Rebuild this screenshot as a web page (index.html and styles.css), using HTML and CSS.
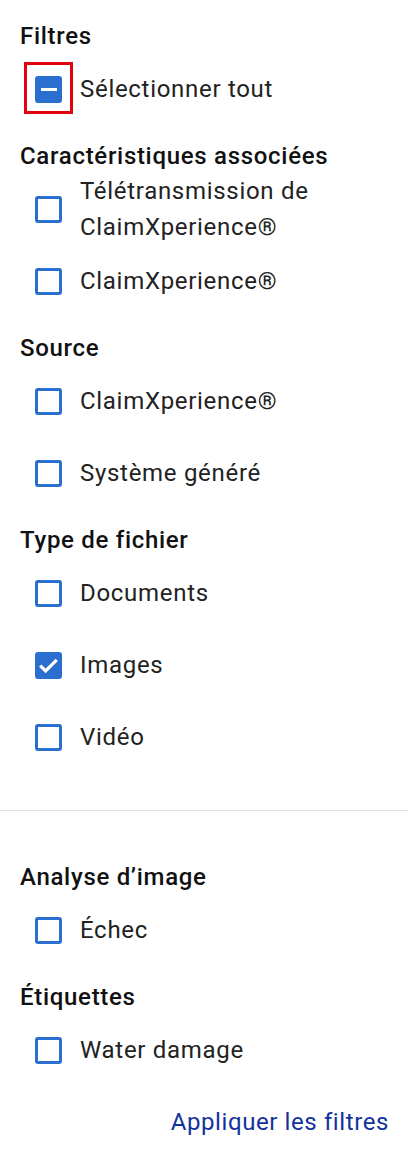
FILE: index.html
```html
<!DOCTYPE html>
<html lang="fr">
<head>
<meta charset="utf-8">
<title>Filtres</title>
<link rel="stylesheet" href="styles.css">
</head>
<body>
<div class="panel">
  <section class="group">
    <h2 class="group-title">Filtres</h2>
    <label class="option">
      <span class="box box--filled box--focus">
        <svg viewBox="0 0 27 27" width="27" height="27"><rect x="6" y="12" width="16" height="3" fill="#fff"/></svg>
      </span>
      <span class="option-label">Sélectionner tout</span>
    </label>
  </section>

  <section class="group">
    <h2 class="group-title">Caractéristiques associées</h2>
    <label class="option">
      <span class="box"></span>
      <span class="option-label">Télétransmission de ClaimXperience®</span>
    </label>
    <label class="option">
      <span class="box"></span>
      <span class="option-label">ClaimXperience®</span>
    </label>
  </section>

  <section class="group">
    <h2 class="group-title">Source</h2>
    <label class="option">
      <span class="box"></span>
      <span class="option-label">ClaimXperience®</span>
    </label>
    <label class="option">
      <span class="box"></span>
      <span class="option-label">Système généré</span>
    </label>
  </section>

  <section class="group">
    <h2 class="group-title">Type de fichier</h2>
    <label class="option">
      <span class="box"></span>
      <span class="option-label">Documents</span>
    </label>
    <label class="option">
      <span class="box box--filled">
        <svg viewBox="0 0 27 27" width="27" height="27"><path d="M5.2 13.6 L10.6 19 L21.8 7.8" fill="none" stroke="#fff" stroke-width="3.2"/></svg>
      </span>
      <span class="option-label">Images</span>
    </label>
    <label class="option">
      <span class="box"></span>
      <span class="option-label">Vidéo</span>
    </label>
  </section>

  <hr class="divider">

  <section class="group">
    <h2 class="group-title">Analyse d’image</h2>
    <label class="option">
      <span class="box"></span>
      <span class="option-label">Échec</span>
    </label>
  </section>

  <section class="group">
    <h2 class="group-title">Étiquettes</h2>
    <label class="option">
      <span class="box"></span>
      <span class="option-label">Water damage</span>
    </label>
  </section>

  <div class="actions">
    <button class="apply" type="button">Appliquer les filtres</button>
  </div>
</div>
</body>
</html>
```

FILE: styles.css
```css
* { box-sizing: border-box; }

html, body {
  margin: 0;
  padding: 0;
  background: #fff;
}

body {
  font-family: Roboto, "Noto Sans", Arial, sans-serif;
  color: #212121;
}

.panel {
  width: 408px;
  padding: 5px 0 6px 20px;
}

.group {
  padding-top: 17px;
}

.group-title {
  margin: 0 0 3px 0;
  font-size: 24px;
  line-height: 28px;
  font-weight: 500;
  letter-spacing: 0.7px;
  color: #111;
}

.option {
  display: flex;
  align-items: center;
  min-height: 72px;
  padding-left: 15px;
  padding-right: 20px;
  gap: 18px;
}

.box {
  position: relative;
  flex: 0 0 27px;
  width: 27px;
  height: 27px;
  border: 3px solid #2a6ecf;
  border-radius: 3px;
  display: flex;
}

.box--filled {
  background: #2a6ecf;
  border: none;
}

.box svg { display: block; }

.box--focus::after {
  content: "";
  position: absolute;
  top: -14px;
  bottom: -11px;
  left: -11px;
  right: -11px;
  border: 3px solid #e3000f;
}

.option-label {
  font-size: 24px;
  line-height: 36px;
  letter-spacing: 0.7px;
  color: #222;
}

.divider {
  margin: 37px 0 35px -20px;
  border: 0;
  border-top: 1px solid #e0e0e0;
  height: 0;
}

.actions {
  display: flex;
  justify-content: flex-end;
  align-items: center;
  height: 72px;
  padding-right: 19px;
}

.apply {
  background: none;
  border: 0;
  padding: 0;
  font-family: Roboto, "Noto Sans", Arial, sans-serif;
  font-size: 24px;
  letter-spacing: 0.6px;
  color: #13329c;
  cursor: pointer;
}
```
